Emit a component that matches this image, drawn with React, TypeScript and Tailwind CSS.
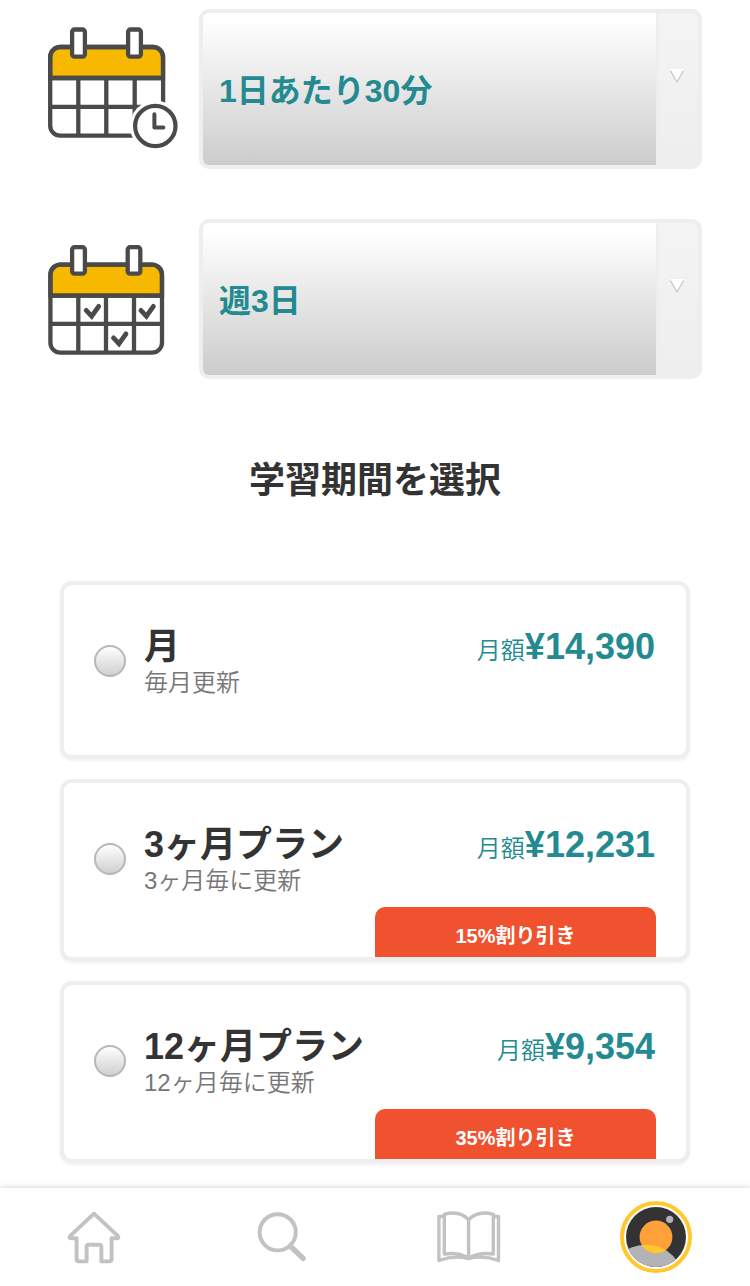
import type { ReactNode } from 'react';

const FONT = "font-['Liberation_Sans','Noto_Sans_CJK_JP',sans-serif]";

function CalendarClockIcon() {
  return (
    <svg className="h-40 w-[151px] shrink-0" viewBox="48 9 151 160" fill="none" stroke="#4a4a4a" strokeWidth="4.3">
      <path d="M50.2 78V57a10 10 0 0 1 10-10H153a10 10 0 0 1 10 10v21z" fill="#f6b900" />
      <rect x="50.2" y="47" width="112.9" height="88.7" rx="10" />
      <path d="M50.2 78H163M50.2 106.8H163M78.3 78v57.7M106.3 78v57.7M134.7 78v57.7" />
      <rect x="72.1" y="29.5" width="12.8" height="27.1" rx="2.5" fill="#fff" />
      <rect x="128.1" y="29.5" width="12.8" height="27.1" rx="2.5" fill="#fff" />
      <circle cx="155.3" cy="126" r="25.5" fill="#fff" stroke="none" />
      <circle cx="155.3" cy="126" r="20.2" fill="#fff" strokeWidth="4.2" />
      <path d="M154.4 114.2v13.2H163.4" strokeWidth="4" strokeLinecap="round" strokeLinejoin="round" />
    </svg>
  );
}

function CalendarCheckIcon() {
  return (
    <svg className="h-40 w-[151px] shrink-0" viewBox="48 219 151 160" fill="none" stroke="#4a4a4a" strokeWidth="4.3">
      <path d="M50.4 295.7v-21a10 10 0 0 1 10-10H152a10 10 0 0 1 10 10v21z" fill="#f6b900" />
      <rect x="50.4" y="264.7" width="111.6" height="88" rx="10" />
      <path d="M50.4 295.7H162M50.4 323.8H162M78.3 295.7v57M106 295.7v57M134 295.7v57" />
      <rect x="72.1" y="247.2" width="12.8" height="26.5" rx="2.5" fill="#fff" />
      <rect x="127.7" y="247.2" width="12.6" height="26.5" rx="2.5" fill="#fff" />
      <path
        d="M86.2 310.4l5.5 5.8 7-9.8M140.9 310.4l5.5 5.8 7-9.8M113.5 337.9l5.5 5.8 7-9.8"
        strokeWidth="4.8"
        strokeLinecap="round"
      />
    </svg>
  );
}

function SelectBox({ label }: { label: string }) {
  return (
    <button className="flex h-40 w-[503px] overflow-hidden rounded-[10px] border-4 border-[#eee] bg-[#eee] text-left">
      <span className="flex h-full w-[453px] items-center rounded-l-[5px] bg-linear-to-b from-white from-5% to-[#ccc] pt-[3px] pl-4 text-[32px] leading-10 font-bold text-[#228a90]">
        {label}
      </span>
      <span className="ml-[3px] flex h-full flex-1 justify-center rounded-r-[5px] bg-linear-to-b from-[#f4f4f4] to-[#eee] pt-14 pr-[3px]">
        <svg className="h-[14px] w-[14px]" viewBox="0 0 14 14">
          <path d="M0 0h14L7 12z" fill="#fff" />
          <path d="M.4 1.6L7 13 13.6 1.6" fill="none" stroke="#c4c4c4" strokeWidth="1.1" />
        </svg>
      </span>
    </button>
  );
}

interface Plan {
  title: string;
  renewal: string;
  price: string;
  discount?: string;
}

const plans: Plan[] = [
  { title: '月', renewal: '毎月更新', price: '¥14,390' },
  { title: '3ヶ月プラン', renewal: '3ヶ月毎に更新', price: '¥12,231', discount: '15%割り引き' },
  { title: '12ヶ月プラン', renewal: '12ヶ月毎に更新', price: '¥9,354', discount: '35%割り引き' },
];

function PlanCard({ plan }: { plan: Plan }) {
  return (
    <div
      className={`flex flex-col rounded-xl border-4 border-[#eee] bg-white pt-[41px] pr-[31px] pl-[30px] shadow-[0_2px_3px_rgba(0,0,0,0.06)] ${plan.discount ? 'h-[182px]' : 'h-[178px]'}`}
    >
      <div className="flex items-start">
        <span className="mt-[19px] size-8 rounded-full border-2 border-[#b7b7b7] bg-linear-to-b from-white to-[#d0d0d0]" />
        <div className="ml-[18px]">
          <div className="text-[36px] leading-[42px] font-bold text-[#333]">{plan.title}</div>
          <div className="text-[24px] leading-[30px] font-[350] text-[#777]">{plan.renewal}</div>
        </div>
        <div className="ml-auto flex items-baseline leading-[42px] text-[#228a90]">
          <span className="text-[24px] font-[350]">月額</span>
          <span className="text-[36px] font-bold">{plan.price}</span>
        </div>
      </div>
      {plan.discount && (
        <div className="mt-auto -mr-px flex h-[50px] w-[281px] items-center justify-center self-end rounded-t-[10px] bg-[#f0512f] pt-[7px] text-[20px] leading-6 font-bold text-white">
          {plan.discount}
        </div>
      )}
    </div>
  );
}

function NavIcon({ children, viewBox }: { children: ReactNode; viewBox: string }) {
  return (
    <svg className="size-[76px]" viewBox={viewBox} fill="none" stroke="#c2c2c2" strokeWidth="3.9" strokeLinejoin="round">
      {children}
    </svg>
  );
}

export default function App() {
  return (
    <div className={`flex h-[1286px] w-[750px] flex-col overflow-hidden bg-white ${FONT}`}>
      <div className="flex flex-col gap-[50px] pt-[9px] pl-12">
        <div className="flex">
          <CalendarClockIcon />
          <SelectBox label="1日あたり30分" />
        </div>
        <div className="flex">
          <CalendarCheckIcon />
          <SelectBox label="週3日" />
        </div>
      </div>

      <h2 className="flex h-[202px] shrink-0 items-center justify-center pt-[2px] text-[36px] leading-[42px] font-bold text-[#333]">
        学習期間を選択
      </h2>

      <div className="flex flex-col gap-5 px-[60px]">
        {plans.map((plan) => (
          <PlanCard key={plan.title} plan={plan} />
        ))}
      </div>

      <nav className="mt-auto flex h-[98px] shrink-0 items-center justify-between bg-white px-14 shadow-[0_0_6px_rgba(0,0,0,0.2)]">
        <NavIcon viewBox="56 1199 76 76">
          <path d="M94 1213.7L70 1236.2q-1.2 2 1.2 2H76.6V1259q0 2.4 2.4 2.4H86.6V1247q0-2.2 2.2-2.2H99.2q2.2 0 2.2 2.2V1261.4H109q2.6 0 2.6-2.4V1238.2H117q2.2 0 1-2z" />
        </NavIcon>
        <NavIcon viewBox="243.3 1199 76 76">
          <circle cx="278" cy="1232.3" r="18.1" />
          <path d="M290.5 1246L303.4 1258.4" strokeWidth="5.4" strokeLinecap="round" />
        </NavIcon>
        <NavIcon viewBox="430.7 1199 76 76">
          <path
            d="M444 1216.5H438.6V1260.5Q454 1255 468.3 1258.5Q483 1255 498.2 1260.5V1216.5H493M468.3 1219.5Q459 1210 444 1214.3V1254Q458 1252 468.3 1258Q479 1252 493 1254V1214.3Q478 1210 468.3 1219.5V1258"
            strokeWidth="3.4"
          />
        </NavIcon>
        <NavIcon viewBox="618 1199 76 76">
          <clipPath id="avatar">
            <circle cx="656" cy="1237" r="30" />
          </clipPath>
          <clipPath id="sun">
            <circle cx="656" cy="1237" r="16.4" />
          </clipPath>
          <circle cx="656" cy="1237" r="34" stroke="#ffc82c" strokeWidth="4" />
          <g stroke="none">
            <circle cx="656" cy="1237" r="30" fill="#333" />
            <circle cx="646" cy="1283" r="38.3" fill="#b4b2b9" clipPath="url(#avatar)" />
            <circle cx="656" cy="1237" r="16.4" fill="#ffa03a" />
            <circle cx="646" cy="1283" r="38.3" fill="#ffc82c" clipPath="url(#sun)" />
            <circle cx="669.7" cy="1219.3" r="3.6" fill="#b4b2b9" />
          </g>
        </NavIcon>
      </nav>
    </div>
  );
}
